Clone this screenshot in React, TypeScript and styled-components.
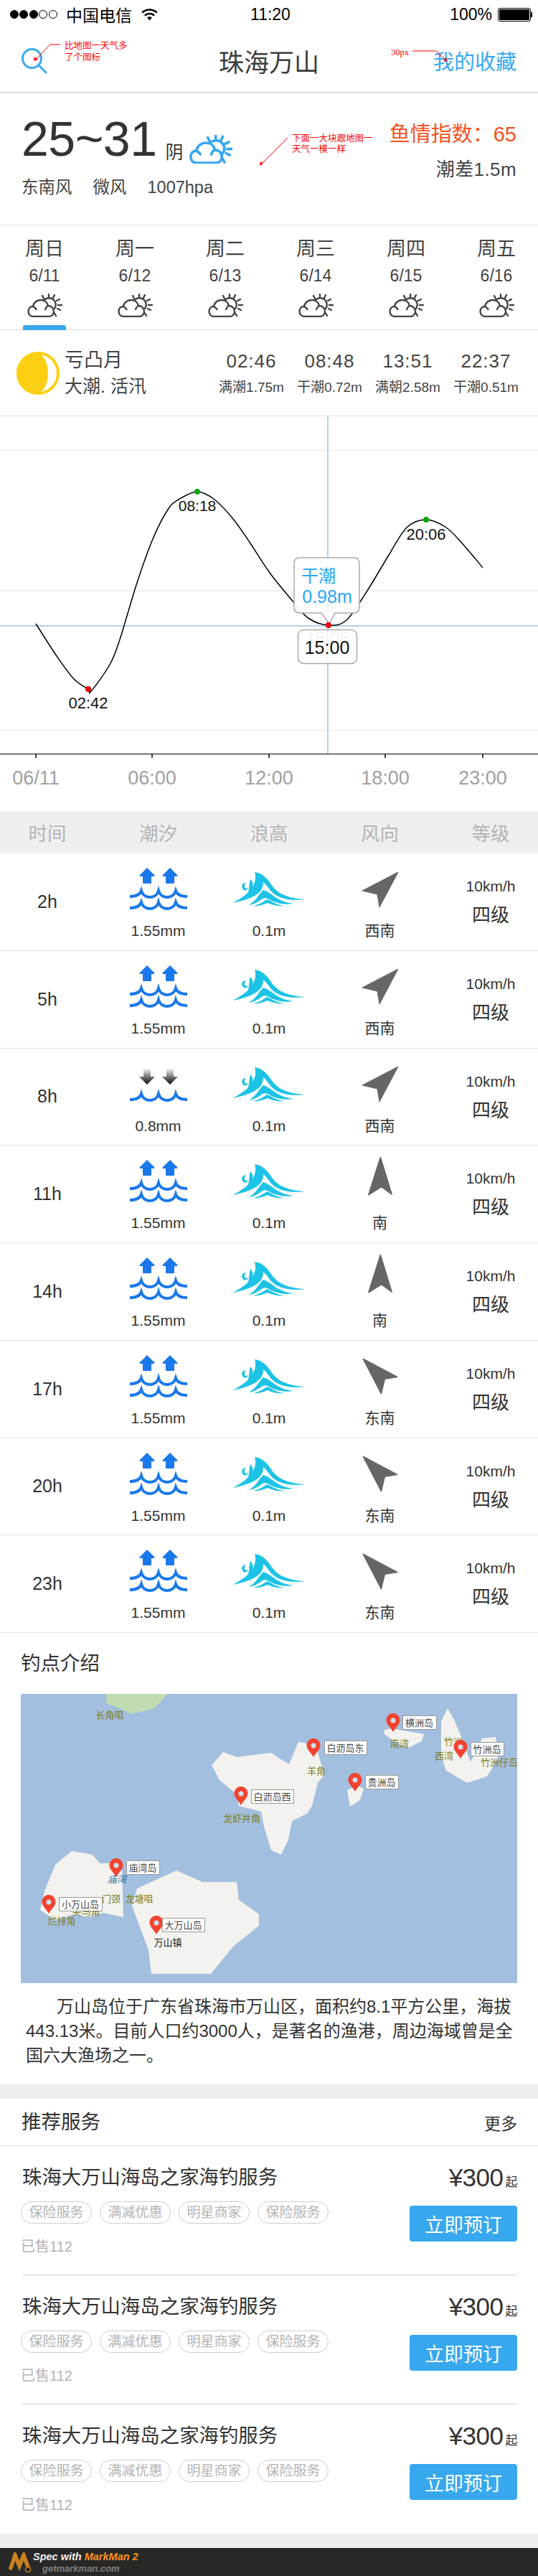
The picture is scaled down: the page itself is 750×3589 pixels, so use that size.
import styled, { createGlobalStyle } from "styled-components";

const SANS = `"Liberation Sans", "Noto Sans CJK SC", sans-serif`;
const BLUE = "#38a8ee";

const GlobalStyle = createGlobalStyle`
  html, body { margin: 0; padding: 0; background: #fff; }
  body { font-family: ${SANS}; color: #333; }
  * { box-sizing: border-box; }
`;

/* ---------- data ---------- */

const days = [
  ["周日", "6/11"],
  ["周一", "6/12"],
  ["周二", "6/13"],
  ["周三", "6/14"],
  ["周四", "6/15"],
  ["周五", "6/16"],
];

const tides = [
  ["02:46", "满潮1.75m"],
  ["08:48", "干潮0.72m"],
  ["13:51", "满朝2.58m"],
  ["22:37", "干潮0.51m"],
];

const hours = [
  { time: "2h", falling: false, tide: "1.55mm", dir: "西南", turn: 0 },
  { time: "5h", falling: false, tide: "1.55mm", dir: "西南", turn: 0 },
  { time: "8h", falling: true, tide: "0.8mm", dir: "西南", turn: 0 },
  { time: "11h", falling: false, tide: "1.55mm", dir: "南", turn: -45 },
  { time: "14h", falling: false, tide: "1.55mm", dir: "南", turn: -45 },
  { time: "17h", falling: false, tide: "1.55mm", dir: "东南", turn: -90 },
  { time: "20h", falling: false, tide: "1.55mm", dir: "东南", turn: -90 },
  { time: "23h", falling: false, tide: "1.55mm", dir: "东南", turn: -90 },
];

const curvePoints: [number, number][] = [
  [50, 869], [79, 914], [103, 946], [123, 960], [127, 963], [153, 926], [167, 891],
  [191, 812], [213, 751], [234, 710], [249, 696], [275, 685], [299, 696], [325, 723],
  [349, 757], [376, 798], [411, 841], [431, 862], [458, 871], [483, 864], [512, 823],
  [541, 775], [567, 735], [594, 724], [622, 735], [646, 759], [673, 791],
];

const axisTicks = [
  [50, "06/11"],
  [212, "06:00"],
  [375, "12:00"],
  [537, "18:00"],
  [673, "23:00"],
] as const;

const islands = [
  "266,99 282,81 301,88 349,82 359,89 374,98 387,67 411,71 423,113 414,124 406,156 399,167 378,177 373,203 363,224 349,218 339,185 335,164 304,156 301,140 277,120",
  "506,51 516,48 562,56 559,66 540,75 521,67 507,56",
  "595,20 605,38 615,62 627,95 643,62 662,60 665,91 650,115 622,124 593,107 586,87 586,38",
  "469,128 478,132 473,148 459,157 455,134",
  "71,219 100,224 110,236 134,236 141,246 143,311 115,305 95,311 74,307 48,315 27,301 33,275 48,238",
  "217,246 253,262 301,262 304,287 332,307 332,323 296,352 265,390 182,390 178,357 155,295 162,271",
];

const mapPlaces = [
  [124, 34, "长角咀"], [528, 74, "南湾"], [603, 71, "竹洲"], [590, 91, "西湾"],
  [667, 100, "竹洲仔岛"], [412, 112, "羊角"], [308, 178, "龙虾井角"], [126, 290, "门颈"],
  [165, 290, "龙塘咀"], [91, 308, "尖马角"], [57, 321, "烂排角"],
] as const;

const mapPins = [
  [519, 27, 532, 30, 47, "横洲岛"],
  [408, 62, 423, 65, 59, "白沥岛东"],
  [613, 64, 627, 67, 46, "竹洲岛"],
  [466, 110, 480, 113, 46, "贵洲岛"],
  [307, 129, 321, 133, 59, "白沥岛西"],
  [133, 229, 147, 232, 46, "庙湾岛"],
  [39, 280, 53, 283, 60, "小万山岛"],
  [189, 309, 197, 312, 59, "大万山岛"],
] as const;

const tags = ["保险服务", "满减优惠", "明星商家", "保险服务"];

// catmull-rom through the sampled tide heights
const smoothPath = (pts: [number, number][]) => {
  let d = `M${pts[0][0]} ${pts[0][1]}`;
  for (let i = 0; i < pts.length - 1; i++) {
    const p0 = pts[Math.max(i - 1, 0)];
    const p1 = pts[i];
    const p2 = pts[i + 1];
    const p3 = pts[Math.min(i + 2, pts.length - 1)];
    const c1x = p1[0] + (p2[0] - p0[0]) / 6;
    const c1y = p1[1] + (p2[1] - p0[1]) / 6;
    const c2x = p2[0] - (p3[0] - p1[0]) / 6;
    const c2y = p2[1] - (p3[1] - p1[1]) / 6;
    d += ` C${c1x} ${c1y} ${c2x} ${c2y} ${p2[0]} ${p2[1]}`;
  }
  return d;
};

/* ---------- icons ---------- */

const WeatherIcon = ({ color, width, stroke }: { color: string; width: number; stroke: number }) => (
  <svg width={width} height={(width * 33) / 49} viewBox="0 0 49 33" fill="none" stroke={color} strokeWidth={stroke} strokeLinecap="round">
    <path d="M23 10A9 9 0 0 1 38 21" />
    <path d="M21 3l2 4M30 1v4M38 2l-2 4M45 8l-4 2M48 16h-5M46 23l-4-2M40 31l-3-5" />
    <path d="M9 32C4 32 1.5 29 1.5 25C1.5 21 4 18 8 18C9 12 14 9 19 9C24 9 28 12 29 17C33 17 37 20 37 25C37 29 34 32 30 32Z" fill="#fff" />
    <path d="M8 18C10 19 11.5 20.5 12.5 22M29 17C27 18 25.5 20 25 22" />
  </svg>
);

const SearchIcon = () => (
  <svg width="36" height="35" viewBox="0 0 36 35" fill="none" stroke={BLUE} strokeWidth="3">
    <circle cx="14.5" cy="14.5" r="13" />
    <path d="M24 24L35 35" />
  </svg>
);

const WifiIcon = () => (
  <svg width="23" height="17" viewBox="0 0 24 18" fill="none" stroke="#000" strokeWidth="2.6">
    <path d="M1 6C7 0 17 0 23 6" />
    <path d="M5 10.5C9 6.5 15 6.5 19 10.5" />
    <path d="M8.5 13.5C10.5 11.5 13.5 11.5 15.5 13.5L12 17.5Z" fill="#000" stroke="none" />
  </svg>
);

const MoonIcon = () => (
  <svg width="60" height="60" viewBox="0 0 60 60">
    <circle cx="30" cy="30" r="28" fill="#fff" stroke="#fdcf12" strokeWidth="4" />
    <path d="M28 2A28 28 0 0 0 28 58A16 28 0 0 0 28 2Z" fill="#fdcf12" />
  </svg>
);

const WAVE_LINE =
  "M0 9C8 9 14 7 16 1C18 8 24 10 28 10C32 10 38 8 40 1C42 8 48 10 52 10C56 10 62 8 64 1C66 7 72 9 80 9";

const TideIcon = ({ falling }: { falling: boolean }) => {
  const arrow = falling
    ? "M6 0H16V11H22L11 22L0 11H6Z"
    : "M11 0L21.5 10.5Q22 12 20 12H17V21Q17 22 16 22H6Q5 22 5 21V12H2Q0 12 0.5 10.5Z";
  const fill = falling ? "url(#arrowFade)" : "#1a78ea";
  const arrowTop = falling ? 8 : 0;
  const waveTops = falling ? [42] : [31, 47];
  return (
    <svg width="80" height="60" viewBox="0 0 80 60">
      <defs>
        <linearGradient id="arrowFade" x1="0" y1="0" x2="0" y2="1">
          <stop offset="0" stopColor="#f2f6fa" />
          <stop offset="0.5" stopColor="#777" />
          <stop offset="1" stopColor="#0c0c0c" />
        </linearGradient>
      </defs>
      <path d={arrow} fill={fill} transform={`translate(13 ${arrowTop})`} />
      <path d={arrow} fill={fill} transform={`translate(45 ${arrowTop})`} />
      {waveTops.map((top) => (
        <path key={top} d={WAVE_LINE} transform={`translate(0 ${top})`} fill="none" stroke="#1a78ea" strokeWidth="4" />
      ))}
    </svg>
  );
};

const SwellIcon = () => (
  <svg width="100" height="48" viewBox="0 0 100 48" fill="#1dc3e6">
    <path d="M30 0C40 1 47 8 53 17C59 26 69 36 100 38C78 41 62 36 53 27C49 22 46 17 42 14C42 21 40 27 30 33C21 38 9 41 0 43C8 38 17 33 23 26C30 18 33 9 30 0Z" />
    <path d="M42 25C50 27 57 35 66 39C72 42 78 43 84 44C70 46 58 43 50 38C46 36 44 36 41 37C36 41 29 45 22 46C28 42 33 37 36 32C38 29 40 27 42 25Z" />
    <path d="M47 38C53 40 60 46 72 47C62 48 55 46 48 43C42 45 36 48 29 47C36 45 42 42 47 38Z" />
    <path d="M24 10C30 15 28 25 20 31C23 24 22 16 24 10Z" />
    <path d="M18 15C13 15 11 19 13 23C15 27 20 26 21 22C18 24 15 22 16 19C16 17 17 16 18 15Z" />
  </svg>
);

const WindIcon = ({ turn }: { turn: number }) => (
  <svg width="50" height="49" viewBox="0 0 50 49" style={{ transform: `rotate(${turn}deg)` }}>
    <path d="M50 0L24 49L21 31L0 26Z" fill="#666" stroke="#666" strokeLinejoin="round" />
  </svg>
);

const MarkManLogo = () => (
  <svg width="32" height="28" viewBox="0 0 32 28" fill="none" strokeLinecap="round">
    <path d="M3 22L9 4L15 19L21 4L28 23" stroke="#c9811f" strokeWidth="5.5" />
    <circle cx="27" cy="24" r="3.5" fill="#222" stroke="#c9811f" strokeWidth="1.5" />
  </svg>
);

/* ---------- layout ---------- */

const Page = styled.div`
  position: relative;
  width: 750px;
  height: 3589px;
  overflow: hidden;
  background: #fff;
`;

const StatusBar = styled.div`
  display: grid;
  grid-template-columns: 1fr auto 1fr;
  align-items: center;
  height: 40px;
  padding: 0 10px 0 14px;
  color: #000;
  font-size: 23px;
`;

const Carrier = styled.div`
  display: flex;
  align-items: center;
`;

const Dot = styled.span<{ $on: boolean }>`
  width: 12px;
  height: 12px;
  margin-right: 1.4px;
  border-radius: 50%;
  border: 1px solid #000;
  background: ${(p) => (p.$on ? "#000" : "transparent")};
`;

const CarrierName = styled.span`
  margin: 0 13px 0 11px;
`;

const Battery = styled.div`
  display: flex;
  align-items: center;
  justify-content: flex-end;
  gap: 8px;
`;

const BatteryBody = styled.span`
  position: relative;
  width: 46px;
  height: 19px;
  border: 1px solid #000;
  border-radius: 3px;
  padding: 1px;
  &::before {
    content: "";
    display: block;
    height: 100%;
    border-radius: 1px;
    background: #000;
  }
  &::after {
    content: "";
    position: absolute;
    top: 5px;
    right: -3px;
    width: 2px;
    height: 7px;
    background: #000;
  }
`;

const NavBar = styled.div`
  display: grid;
  grid-template-columns: 1fr auto 1fr;
  align-items: center;
  height: 89px;
  padding: 0 30px;
  border-bottom: 1px solid #c6c6c6;
`;

const NavTitle = styled.div`
  font-size: 35px;
  color: #3c3c3c;
`;

const NavLink = styled.div`
  justify-self: end;
  font-size: 29px;
  color: ${BLUE};
`;

const Notes = styled.svg`
  position: absolute;
  top: 0;
  left: 0;
  text {
    font-family: "Liberation Serif", "Noto Sans CJK SC", serif;
    font-size: 12.5px;
    fill: #f00;
  }
`;

const WeatherPanel = styled.section`
  display: flex;
  justify-content: space-between;
  height: 185px;
  padding: 29px 30px 0;
  border-bottom: 1px solid #e0e0e0;
`;

const TempRow = styled.div`
  display: flex;
  align-items: flex-end;
  height: 70px;
`;

const Temp = styled.span`
  font-size: 68px;
  line-height: 70px;
  letter-spacing: -0.5px;
  color: #333;
`;

const Sky = styled.span`
  margin: 0 8px 0 12px;
  font-size: 25px;
  line-height: 32px;
`;

const WindRow = styled.div`
  display: flex;
  gap: 29px;
  margin-top: 18px;
  font-size: 23.5px;
  line-height: 30px;
  color: #444;
`;

const IndexBlock = styled.div`
  padding-top: 12px;
  text-align: right;
`;

const FishIndex = styled.div`
  font-size: 29px;
  line-height: 34px;
  color: #f4511e;
`;

const TideGap = styled.div`
  margin-top: 15px;
  font-size: 26px;
  line-height: 34px;
  letter-spacing: 0.4px;
  color: #444;
`;

const DayStrip = styled.div`
  display: grid;
  grid-template-columns: repeat(6, 126px);
  justify-content: center;
  height: 146px;
  padding-left: 4px;
  border-bottom: 1px solid #e0e0e0;
`;

const DayCell = styled.div<{ $active: boolean }>`
  position: relative;
  display: flex;
  flex-direction: column;
  align-items: center;
  padding-top: 17px;
  ${(p) =>
    p.$active &&
    `&::after {
      content: "";
      position: absolute;
      bottom: -1px;
      left: 33px;
      width: 60px;
      height: 7px;
      border-radius: 3px 3px 0 0;
      background: ${BLUE};
    }`}
`;

const DayName = styled.div`
  font-size: 27px;
  line-height: 32px;
  color: #444;
`;

const DayDate = styled.div`
  margin-top: 7px;
  font-size: 23px;
  line-height: 28px;
  color: #444;
`;

const DayIcon = styled.div`
  margin-top: 11px;
  line-height: 0;
`;

const MoonPanel = styled.section`
  display: flex;
  align-items: center;
  height: 120px;
  padding: 0 36px 0 23px;
  border-bottom: 1px solid #e0e0e0;
`;

const MoonText = styled.div`
  margin-left: 7px;
  color: #444;
`;

const MoonName = styled.div`
  font-size: 27px;
  line-height: 36px;
`;

const MoonTide = styled.div`
  margin-top: 1px;
  font-size: 25px;
  line-height: 34px;
`;

const TideTimes = styled.div`
  display: grid;
  grid-template-columns: repeat(4, 109px);
  margin-left: auto;
  margin-right: -18px;
`;

const TideTime = styled.div`
  text-align: center;
  color: #444;
`;

const Clock = styled.div`
  font-size: 26px;
  line-height: 30px;
  letter-spacing: 1px;
`;

const TideNote = styled.div`
  margin-top: 10px;
  font-size: 19px;
  line-height: 24px;
  white-space: nowrap;
`;

const ChartSvg = styled.svg`
  display: block;
  text {
    font-family: ${SANS};
    text-anchor: middle;
  }
`;

const HeadRow = styled.div`
  display: grid;
  grid-template-columns: repeat(5, 154.5px);
  justify-content: center;
  align-items: center;
  height: 59px;
  background: #efefef;
  font-size: 26.5px;
  color: #b4b4b4;
  text-align: center;
`;

const HourRow = styled.div`
  display: grid;
  grid-template-columns: repeat(5, 154.5px);
  justify-content: center;
  height: 135.75px;
  border-bottom: 1px solid #e2e2e2;
`;

const TimeCell = styled.div`
  display: flex;
  align-items: center;
  justify-content: center;
  font-size: 25px;
  color: #333;
`;

const IconCell = styled.div`
  display: flex;
  flex-direction: column;
  align-items: center;
  padding-top: 20px;
`;

const IconSlot = styled.div`
  display: flex;
  align-items: center;
  justify-content: center;
  height: 60px;
`;

const CellLabel = styled.div`
  margin-top: 13px;
  font-size: 21px;
  line-height: 30px;
  color: #333;
`;

const LevelCell = styled.div`
  padding-top: 31px;
  text-align: center;
  color: #333;
`;

const Speed = styled.div`
  font-size: 21px;
  line-height: 30px;
`;

const Level = styled.div`
  margin-top: 10px;
  font-size: 26px;
  line-height: 30px;
`;

const IntroPanel = styled.section`
  padding: 23px 29px 23px;
`;

const SectionTitle = styled.h2`
  margin: 0;
  font-size: 27.5px;
  font-weight: 400;
  line-height: 40px;
  color: #333;
`;

const MapSvg = styled.svg`
  display: block;
  margin-top: 22px;
  background: #a3bfdf;
  text {
    font-family: ${SANS};
    font-size: 13px;
  }
`;

const IntroText = styled.p`
  margin: 16px 2px 0 7px;
  font-size: 24px;
  line-height: 34px;
  text-indent: 43px;
  color: #333;
`;

const Band = styled.div`
  height: 20px;
  background: #efefef;
`;

const ServiceHead = styled.div`
  display: flex;
  justify-content: space-between;
  align-items: center;
  height: 66px;
  padding: 0 29px 0 30px;
  border-bottom: 1px solid #e0e0e0;
`;

const More = styled.span`
  font-size: 23px;
  color: #333;
`;

const ServiceItem = styled.div<{ $last: boolean }>`
  display: flex;
  justify-content: space-between;
  height: 180px;
  margin: 0 29px 0 31px;
  padding-top: 24px;
  border-bottom: ${(p) => (p.$last ? "none" : "1px solid #ccc")};
`;

const ServiceTitle = styled.div`
  font-size: 27.4px;
  line-height: 40px;
  color: #333;
`;

const TagRow = styled.div`
  display: flex;
  gap: 11px;
  margin: 13px 0 0 -2px;
`;

const Tag = styled.span`
  width: 99px;
  height: 31px;
  border: 1px solid #ccc;
  border-radius: 16px;
  font-size: 19px;
  line-height: 29px;
  text-align: center;
  color: #b4b4b4;
`;

const Sold = styled.div`
  margin: 17px 0 0 -2px;
  font-size: 20px;
  line-height: 30px;
  color: #b4b4b4;
`;

const ServiceSide = styled.div`
  display: flex;
  flex-direction: column;
  align-items: flex-end;
`;

const Price = styled.div`
  font-size: 35px;
  line-height: 40px;
  letter-spacing: -0.5px;
  color: #333;
`;

const PriceUnit = styled.span`
  margin-left: 3px;
  font-size: 17px;
`;

const BookButton = styled.button`
  width: 150px;
  height: 50px;
  margin-top: 12px;
  padding: 0;
  border: none;
  border-radius: 4px;
  background: ${BLUE};
  color: #fff;
  font-family: ${SANS};
  font-size: 27px;
`;

const MarkBar = styled.footer`
  display: flex;
  align-items: center;
  height: 39px;
  padding-left: 12px;
  background: #282828;
  font-style: italic;
`;

const MarkLines = styled.div`
  margin-left: 2px;
`;

const MarkTop = styled.div`
  font-size: 14.5px;
  font-weight: 700;
  line-height: 17px;
  color: #eee;
  b {
    color: #f7941d;
  }
`;

const MarkSite = styled.div`
  margin-left: 13px;
  font-size: 13px;
  font-weight: 700;
  line-height: 15px;
  color: #808080;
`;

/* ---------- page ---------- */

const App = () => (
  <Page>
    <GlobalStyle />
    <StatusBar>
      <Carrier>
        {[1, 1, 1, 0, 0].map((on, i) => (
          <Dot key={i} $on={!!on} />
        ))}
        <CarrierName>中国电信</CarrierName>
        <WifiIcon />
      </Carrier>
      <span>11:20</span>
      <Battery>
        <span>100%</span>
        <BatteryBody />
      </Battery>
    </StatusBar>

    <NavBar>
      <SearchIcon />
      <NavTitle>珠海万山</NavTitle>
      <NavLink>我的收藏</NavLink>
    </NavBar>

    <WeatherPanel>
      <div>
        <TempRow>
          <Temp>25~31</Temp>
          <Sky>阴</Sky>
          <WeatherIcon color={BLUE} width={60} stroke={3} />
        </TempRow>
        <WindRow>
          <span>东南风</span>
          <span>微风</span>
          <span>1007hpa</span>
        </WindRow>
      </div>
      <IndexBlock>
        <FishIndex>鱼情指数：65</FishIndex>
        <TideGap>潮差1.5m</TideGap>
      </IndexBlock>
    </WeatherPanel>

    <DayStrip>
      {days.map(([name, date], i) => (
        <DayCell key={date} $active={i === 0}>
          <DayName>{name}</DayName>
          <DayDate>{date}</DayDate>
          <DayIcon>
            <WeatherIcon color="#444" width={49} stroke={2.4} />
          </DayIcon>
        </DayCell>
      ))}
    </DayStrip>

    <MoonPanel>
      <MoonIcon />
      <MoonText>
        <MoonName>亏凸月</MoonName>
        <MoonTide>大潮. 活汛</MoonTide>
      </MoonText>
      <TideTimes>
        {tides.map(([clock, note]) => (
          <TideTime key={clock}>
            <Clock>{clock}</Clock>
            <TideNote>{note}</TideNote>
          </TideTime>
        ))}
      </TideTimes>
    </MoonPanel>

    <ChartSvg width="750" height="550" viewBox="0 580 750 550">
      {[627.5, 823, 1017.5].map((y) => (
        <line key={y} x1="0" x2="750" y1={y} y2={y} stroke="#f0f0f0" strokeWidth="2" />
      ))}
      <line x1="457" x2="457" y1="580" y2="1050" stroke="#b4d0ea" strokeWidth="2" />
      <line x1="0" x2="750" y1="872" y2="872" stroke="#b4d0ea" strokeWidth="2" />
      <path d={smoothPath(curvePoints)} fill="none" stroke="#000" strokeWidth="1.5" />
      <line x1="0" x2="750" y1="1050.5" y2="1050.5" stroke="#000" />
      {axisTicks.map(([x, label]) => (
        <g key={label}>
          <line x1={x} x2={x} y1="1050" y2="1056" stroke="#000" strokeWidth="1.5" />
          <text x={x} y="1093" fontSize="27" fill="#a0a0a0">
            {label}
          </text>
        </g>
      ))}
      <circle cx="123" cy="960" r="4" fill="#e6000e" />
      <circle cx="275" cy="685" r="4" fill="#0aa80a" />
      <circle cx="594" cy="724" r="4" fill="#0aa80a" />
      <text x="123" y="987" fontSize="22" fill="#111">02:42</text>
      <text x="275" y="712" fontSize="21" fill="#111">08:18</text>
      <text x="594" y="752" fontSize="22" fill="#111">20:06</text>

      <path
        d="M418 777H493Q501 777 501 785V846Q501 854 493 854H467L459 869L448 854H418Q410 854 410 846V785Q410 777 418 777Z"
        fill="#fff"
        fillOpacity="0.96"
        stroke="#aaa"
        strokeWidth="1.5"
      />
      <circle cx="458" cy="871" r="4" fill="#e6000e" />
      <text x="444" y="811" fontSize="24" fill="#29a7f8">干潮</text>
      <text x="456" y="840" fontSize="25" fill="#29a7f8">0.98m</text>
      <text x="457" y="897" fontSize="24" fill="#ccc">15:05</text>
      <rect x="415.5" y="877.5" width="82" height="47" rx="8" fill="#fff" fillOpacity="0.75" stroke="#aaa" strokeWidth="1.5" />
      <text x="456" y="911" fontSize="25" fill="#111">15:00</text>
    </ChartSvg>

    <HeadRow>
      <span>时间</span>
      <span>潮汐</span>
      <span>浪高</span>
      <span>风向</span>
      <span>等级</span>
    </HeadRow>

    {hours.map((h) => (
      <HourRow key={h.time}>
        <TimeCell>{h.time}</TimeCell>
        <IconCell>
          <IconSlot>
            <TideIcon falling={h.falling} />
          </IconSlot>
          <CellLabel>{h.tide}</CellLabel>
        </IconCell>
        <IconCell>
          <IconSlot>
            <SwellIcon />
          </IconSlot>
          <CellLabel>0.1m</CellLabel>
        </IconCell>
        <IconCell>
          <IconSlot>
            <WindIcon turn={h.turn} />
          </IconSlot>
          <CellLabel>{h.dir}</CellLabel>
        </IconCell>
        <LevelCell>
          <Speed>10km/h</Speed>
          <Level>四级</Level>
        </LevelCell>
      </HourRow>
    ))}

    <IntroPanel>
      <SectionTitle>钓点介绍</SectionTitle>
      <MapSvg width="692" height="403" viewBox="0 0 692 403">
        <polygon points="119,0 205,0 186,20 155,28 138,20 119,13" fill="#c0dcb0" />
        {islands.map((points) => (
          <polygon key={points} points={points} fill="#f3f2ee" />
        ))}
        {mapPlaces.map(([x, y, name]) => (
          <text key={name} x={x} y={y} textAnchor="middle" fill="#7d7d1c">
            {name}
          </text>
        ))}
        <text x="134" y="263" textAnchor="middle" fill="#2f6f9f" fontStyle="italic">庙湾</text>
        <text x="205" y="351" textAnchor="middle" fill="#222">万山镇</text>
        {mapPins.map(([pinX, pinY, boxX, boxY, boxW, name]) => (
          <g key={name}>
            <path
              d="M9.5 0C15 0 19 4.5 19 10C19 15 13 20 9.5 26C6 20 0 15 0 10C0 4.5 4 0 9.5 0Z"
              fill="#f2432f"
              transform={`translate(${pinX - 9.5} ${pinY})`}
            />
            <circle cx={pinX} cy={pinY + 10} r="3.5" fill="#cfe0ee" />
            <rect x={boxX + 0.5} y={boxY + 0.5} width={boxW} height="19" fill="#fff" stroke="#999" />
            <text x={boxX + boxW / 2} y={boxY + 15} textAnchor="middle" fill="#444" fontSize="13">
              {name}
            </text>
          </g>
        ))}
      </MapSvg>
      <IntroText>
        万山岛位于广东省珠海市万山区，面积约8.1平方公里，海拔
        <br />
        443.13米。目前人口约3000人，是著名的渔港，周边海域曾是全
        <br />
        国六大渔场之一。
      </IntroText>
    </IntroPanel>

    <Band />

    <section>
      <ServiceHead>
        <SectionTitle>推荐服务</SectionTitle>
        <More>更多</More>
      </ServiceHead>
      {[0, 1, 2].map((i) => (
        <ServiceItem key={i} $last={i === 2}>
          <div>
            <ServiceTitle>珠海大万山海岛之家海钓服务</ServiceTitle>
            <TagRow>
              {tags.map((tag, t) => (
                <Tag key={t}>{tag}</Tag>
              ))}
            </TagRow>
            <Sold>已售112</Sold>
          </div>
          <ServiceSide>
            <Price>
              ¥300
              <PriceUnit>起</PriceUnit>
            </Price>
            <BookButton>立即预订</BookButton>
          </ServiceSide>
        </ServiceItem>
      ))}
    </section>

    <Band />
    <MarkBar>
      <MarkManLogo />
      <MarkLines>
        <MarkTop>
          Spec with <b>MarkMan 2</b>
        </MarkTop>
        <MarkSite>getmarkman.com</MarkSite>
      </MarkLines>
    </MarkBar>

    <Notes width="750" height="240" viewBox="0 0 750 240">
      <g fill="none" stroke="#f00">
        <path d="M84 62H70L49 84" />
        <path d="M575 71H608L622 84" />
        <path d="M401 192L363 230" />
      </g>
      <g fill="#f00">
        <path d="M47 85L48 79L53 83Z" />
        <path d="M623 86L618 85L622 80Z" />
        <path d="M362 231L363 225L367 228Z" />
      </g>
      <text x="90" y="68">比地图一天气多</text>
      <text x="90" y="84">了个图标</text>
      <text x="545" y="77">30px</text>
      <text x="407" y="197">下面一大块跟地图一</text>
      <text x="407" y="212">天气一模一样</text>
    </Notes>
  </Page>
);

export default App;
